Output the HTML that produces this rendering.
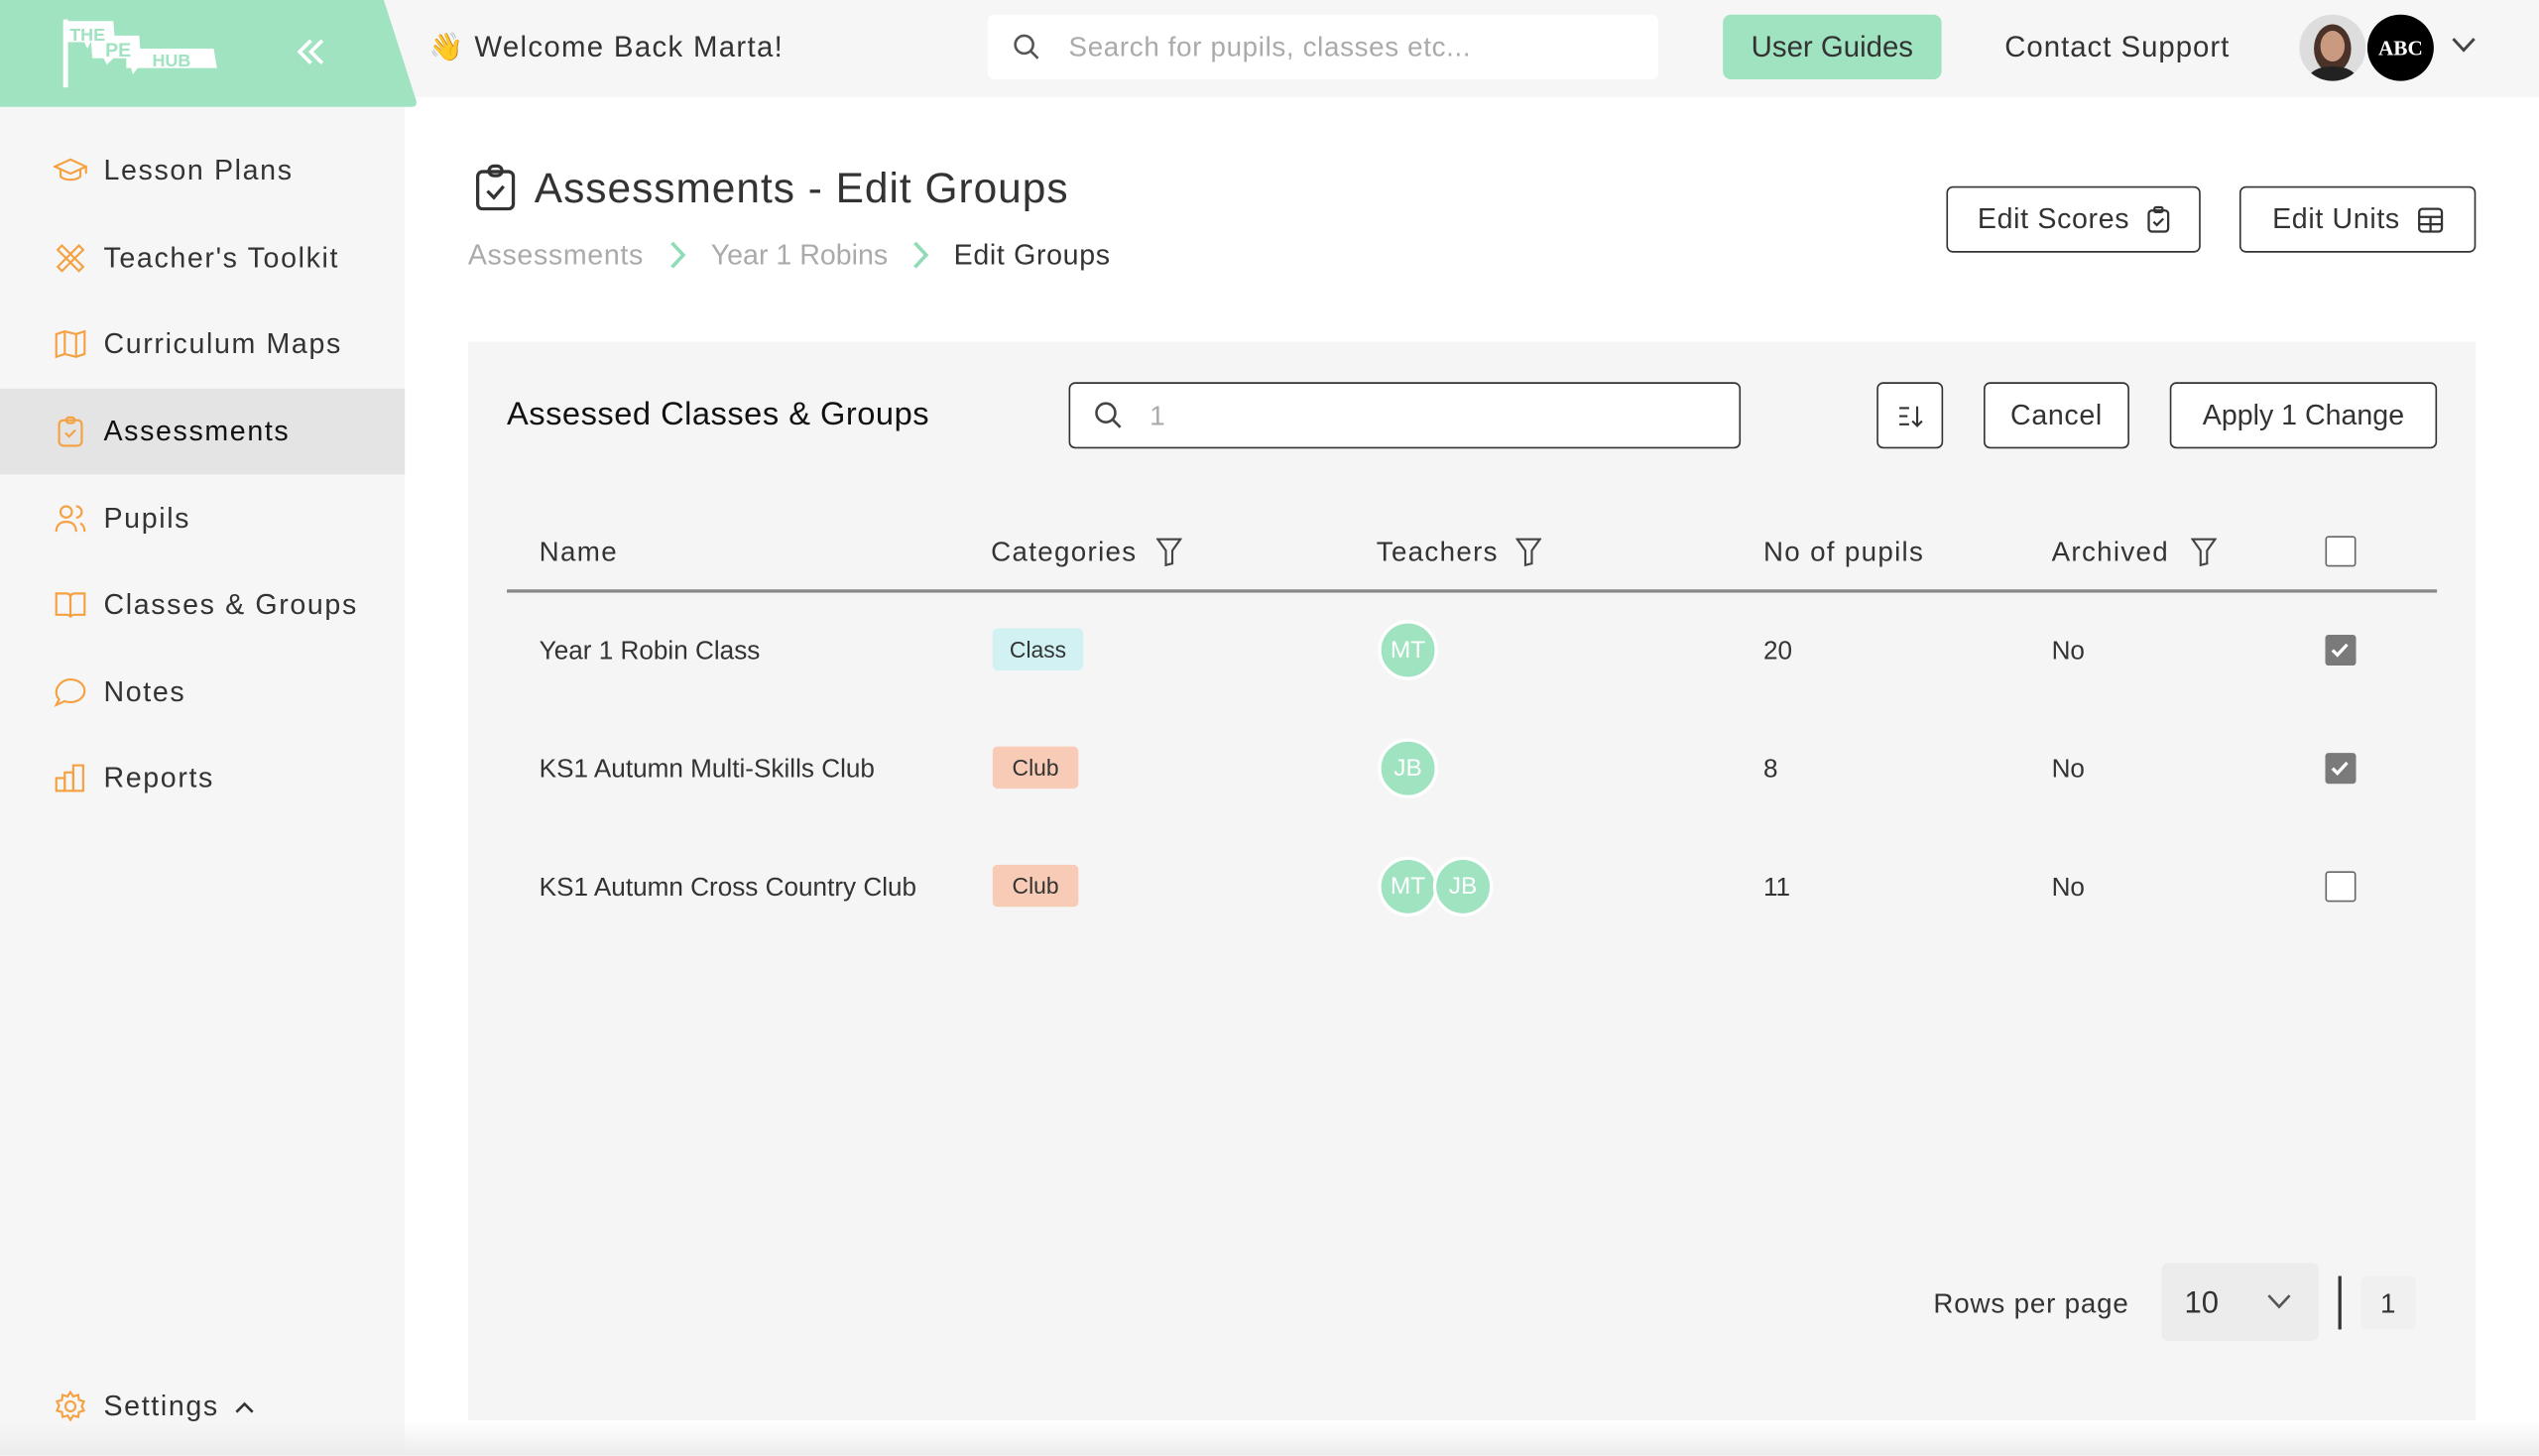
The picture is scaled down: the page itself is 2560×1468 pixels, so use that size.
<!DOCTYPE html>
<html><head><meta charset="utf-8"><style>
*{box-sizing:border-box;margin:0;padding:0}
html,body{width:2560px;height:1467px;overflow:hidden;background:#fff}
#w{position:absolute;left:0;top:0;width:1568px;height:899px;transform:scale(1.632653);transform-origin:0 0;font-family:"Liberation Sans",sans-serif;color:#333;background:#fff}
.a{position:absolute}
.t{position:absolute;white-space:nowrap;line-height:1;transform:translateY(-50%)}
.btn{position:absolute;border:1.3px solid #333;border-radius:4px;background:#fff;display:flex;align-items:center;justify-content:center;font-size:17.5px;color:#333;letter-spacing:.4px}
.nav{position:absolute;left:0;width:250px;height:53px;display:flex;align-items:center}
.nav svg{position:absolute;left:33px;width:21px;height:21px}
.nav span{position:absolute;left:64px;font-size:17.5px;color:#333;letter-spacing:1px}
.av{position:absolute;width:37px;height:37px;border-radius:50%;background:#9fe3c1;border:2px solid #fff;color:#fff;font-size:15px;display:flex;align-items:center;justify-content:center}
.cb{position:absolute;width:19px;height:19px;border-radius:2px;border:1.3px solid #666;background:#fff}
.cb.on{background:#7a7a7a;border-color:#7a7a7a}
.h{font-size:17px;letter-spacing:.8px}
.r{font-size:16px}
</style></head><body><div id="w">
<div class="a" style="left:0;top:0;width:1568px;height:60px;background:#f6f6f6"></div>
<div class="a" style="left:0;top:60px;width:250px;height:839px;background:#f6f6f6"></div>
<svg class="a" style="left:0;top:0" width="262" height="68"><path d="M0 0H237L257 62Q258 66 254 66H0Z" fill="#9fe3c1"/></svg>
<svg class="a" style="left:36px;top:10px" width="100" height="45" viewBox="0 0 100 45">
<rect x="3" y="2" width="3" height="42" fill="#fff"/>
<path d="M5 3H34L35 16H20L18 20 16 16H6Z" fill="#fff"/>
<path d="M20 12H50L51 26H34L30 30 28 26H21Z" fill="#fff"/>
<path d="M42 20H96L98 32H49L46 36 45 32H42Z" fill="#fff"/>
<text x="7" y="15" font-size="11" font-weight="bold" fill="#9fe3c1" font-family="Liberation Sans">THE</text>
<text x="29" y="25" font-size="12" font-weight="bold" fill="#9fe3c1" font-family="Liberation Sans">PE</text>
<text x="58" y="31" font-size="11" font-weight="bold" fill="#9fe3c1" font-family="Liberation Sans">HUB</text>
</svg>
<svg class="a" style="left:183px;top:24px" width="18" height="16" viewBox="0 0 18 16" fill="none" stroke="#fff" stroke-width="2.2"><path d="M9 1 2 8l7 7M16 1 9 8l7 7"/></svg>
<div class="t" style="left:265px;top:29px;font-size:17px">👋</div>
<div class="t" style="left:293px;top:29px;font-size:18px;color:#333;letter-spacing:.8px">Welcome Back Marta!</div>
<div class="a" style="left:610px;top:9px;width:414px;height:40px;background:#fff;border-radius:4px"></div>
<svg class="a" style="left:625px;top:20px" width="18" height="18" viewBox="0 0 18 18" fill="none" stroke="#555" stroke-width="1.6"><circle cx="7.5" cy="7.5" r="5.5"/><path d="M11.5 11.5 16 16"/></svg>
<div class="t" style="left:660px;top:29px;font-size:17px;color:#aaa;letter-spacing:.4px">Search for pupils, classes etc...</div>
<div class="a" style="left:1064px;top:9px;width:135px;height:40px;background:#9fe3c1;border-radius:5px;display:flex;align-items:center;justify-content:center;font-size:18px;color:#333">User Guides</div>
<div class="t" style="left:1238px;top:29px;font-size:18px;color:#333;letter-spacing:.6px">Contact Support</div>
<div class="a" style="left:1420px;top:9px;width:41px;height:41px;border-radius:50%;background:#ddd;overflow:hidden"><div class="a" style="left:9px;top:6px;width:23px;height:30px;border-radius:50%;background:#4a3228"></div><div class="a" style="left:13px;top:10px;width:15px;height:19px;border-radius:50%;background:#c99a80"></div><div class="a" style="left:6px;top:32px;width:29px;height:14px;border-radius:50%;background:#222"></div></div>
<div class="a" style="left:1462px;top:9px;width:41px;height:41px;border-radius:50%;background:#000;color:#fff;font-weight:bold;font-size:13px;display:flex;align-items:center;justify-content:center;font-family:'Liberation Serif',serif">ABC</div>
<svg class="a" style="left:1514px;top:23px" width="15" height="10" viewBox="0 0 15 10" fill="none" stroke="#444" stroke-width="1.8"><path d="M1 1l6.5 7L14 1"/></svg>
<div class="nav" style="top:79px"><svg viewBox="0 0 24 24" fill="none" stroke="#f5a041" stroke-width="1.5"><path d="M1 9l11-5 11 5-11 5z"/><path d="M5 11v5c3 3 11 3 14 0v-5M23 9v5"/></svg><span>Lesson Plans</span></div>
<div class="nav" style="top:133px"><svg viewBox="0 0 24 24" fill="none" stroke="#f5a041" stroke-width="1.5"><path d="M3 6l3-3 15 15-3 3z"/><path d="M3 18l15-15 3 3-15 15z"/></svg><span>Teacher's Toolkit</span></div>
<div class="nav" style="top:186px"><svg viewBox="0 0 24 24" fill="none" stroke="#f5a041" stroke-width="1.5"><path d="M2 5l6-2 8 2 6-2v16l-6 2-8-2-6 2z"/><path d="M8 3v16M16 5v16"/></svg><span>Curriculum Maps</span></div>
<div class="a" style="left:0;top:240px;width:250px;height:53px;background:#e4e4e4"></div>
<div class="nav" style="top:240px"><svg viewBox="0 0 24 24" fill="none" stroke="#f5a041" stroke-width="1.5"><rect x="4" y="4" width="16" height="18" rx="3"/><rect x="9" y="2" width="6" height="4" rx="2"/><path d="M8.5 13l2.5 2.5 4.5-4.5"/></svg><span style="color:#111">Assessments</span></div>
<div class="nav" style="top:294px"><svg viewBox="0 0 24 24" fill="none" stroke="#f5a041" stroke-width="1.5"><circle cx="9" cy="7" r="4"/><path d="M2 21c0-5 3-7 7-7s7 2 7 7M16 3a4 4 0 010 8M19 15c2 1 3 3 3 6"/></svg><span>Pupils</span></div>
<div class="nav" style="top:347px"><svg viewBox="0 0 24 24" fill="none" stroke="#f5a041" stroke-width="1.5"><path d="M2 4h7c2 0 3 1 3 3v14c0-1-1-2-3-2H2zM22 4h-7c-2 0-3 1-3 3v14c0-1 1-2 3-2h7z"/></svg><span>Classes &amp; Groups</span></div>
<div class="nav" style="top:401px"><svg viewBox="0 0 24 24" fill="none" stroke="#f5a041" stroke-width="1.5"><path d="M12 3c5.5 0 10 3.5 10 8s-4.5 8-10 8c-1.5 0-3-.3-4-.7L2 21l2-4c-1.3-1.5-2-3.2-2-5 0-4.5 4.5-9 10-9z"/></svg><span>Notes</span></div>
<div class="nav" style="top:454px"><svg viewBox="0 0 24 24" fill="none" stroke="#f5a041" stroke-width="1.5"><rect x="2" y="12" width="6" height="9"/><rect x="8" y="8" width="6" height="13"/><rect x="14" y="3" width="7" height="18"/></svg><span>Reports</span></div>
<div class="nav" style="top:842px"><svg viewBox="0 0 24 24" fill="none" stroke="#f5a041" stroke-width="1.5"><circle cx="12" cy="12" r="3.5"/><path d="M12 2l2 3 3.5-1 .5 3.5 3.5 1-1.5 3.5 1.5 3-3.5 1-.5 3.5-3.5-1-2 3-2-3-3.5 1-.5-3.5-3.5-1 1.5-3.5L2.5 8.5l3.5-1 .5-3.5 3.5 1z"/></svg><span>Settings</span><svg style="left:145px;width:12px;height:8px" viewBox="0 0 12 8" fill="none" stroke="#333" stroke-width="1.6"><path d="M1 7l5-5 5 5"/></svg></div>
<div class="a" style="left:0;top:878px;width:1568px;height:21px;background:linear-gradient(#fff0,#ececec)"></div>
<svg class="a" style="left:293px;top:101px" width="26" height="29" viewBox="0 0 26 29" fill="none" stroke="#333" stroke-width="2"><rect x="2" y="5" width="22" height="23" rx="3"/><rect x="9" y="1.5" width="8" height="6" rx="3"/><path d="M8 17l4 4 6-7"/></svg>
<div class="t" style="left:330px;top:116px;font-size:26px;color:#333;letter-spacing:.6px">Assessments - Edit Groups</div>
<div class="t" style="left:289px;top:158px;font-size:17.5px;color:#aaa;letter-spacing:.4px">Assessments</div>
<svg class="a" style="left:413px;top:148px" width="12" height="19" viewBox="0 0 12 19" fill="none" stroke="#8fdcb6" stroke-width="2.2"><path d="M2 2l7 7.5L2 17"/></svg>
<div class="t" style="left:439px;top:158px;font-size:17.5px;color:#aaa">Year 1 Robins</div>
<svg class="a" style="left:563px;top:148px" width="12" height="19" viewBox="0 0 12 19" fill="none" stroke="#8fdcb6" stroke-width="2.2"><path d="M2 2l7 7.5L2 17"/></svg>
<div class="t" style="left:589px;top:158px;font-size:17.5px;color:#333;letter-spacing:.4px">Edit Groups</div>
<div class="btn" style="left:1202px;top:115px;width:157px;height:41px">Edit Scores&nbsp;&nbsp;<svg width="14" height="17" viewBox="0 0 14 17" fill="none" stroke="#333" stroke-width="1.4"><rect x="1" y="3" width="12" height="13" rx="2"/><rect x="4.5" y="1" width="5" height="3" rx="1"/><path d="M4 10l2 2 4-4"/></svg></div>
<div class="btn" style="left:1383px;top:115px;width:146px;height:41px">Edit Units&nbsp;&nbsp;<svg width="16" height="16" viewBox="0 0 16 16" fill="none" stroke="#333" stroke-width="1.4"><rect x="1" y="1" width="14" height="14" rx="2"/><path d="M1 6h14M1 10.5h14M8 6v9"/></svg></div>
<div class="a" style="left:289px;top:211px;width:1240px;height:666px;background:#f5f5f5"></div>
<div class="t" style="left:313px;top:256px;font-size:20px;color:#111;letter-spacing:.3px">Assessed Classes &amp; Groups</div>
<div class="a" style="left:660px;top:236px;width:415px;height:41px;background:#fff;border:1.3px solid #333;border-radius:4px"></div>
<svg class="a" style="left:675px;top:247px" width="19" height="19" viewBox="0 0 18 18" fill="none" stroke="#444" stroke-width="1.5"><circle cx="7.5" cy="7.5" r="5.5"/><path d="M11.5 11.5 16 16"/></svg>
<div class="t" style="left:710px;top:257px;font-size:17px;color:#aaa">1</div>
<div class="btn" style="left:1159px;top:236px;width:41px;height:41px"><svg width="16" height="14" viewBox="0 0 16 14" fill="none" stroke="#333" stroke-width="1.3"><path d="M1 2h6M1 7h5M1 12h6M12 1v12M9 10l3 3 3-3"/></svg></div>
<div class="btn" style="left:1225px;top:236px;width:90px;height:41px">Cancel</div>
<div class="btn" style="left:1340px;top:236px;width:165px;height:41px;letter-spacing:0">Apply 1 Change</div>
<div class="t h" style="left:333px;top:341px">Name</div>
<div class="t h" style="left:612px;top:341px">Categories</div>
<div class="t h" style="left:850px;top:341px">Teachers</div>
<div class="t h" style="left:1089px;top:341px">No of pupils</div>
<div class="t h" style="left:1267px;top:341px">Archived</div>
<svg class="a" style="left:714px;top:332px" width="16" height="18" viewBox="0 0 16 18" fill="none" stroke="#444" stroke-width="1.3"><path d="M1 1h14l-5 7v8l-4 1V8z"/></svg>
<svg class="a" style="left:936px;top:332px" width="16" height="18" viewBox="0 0 16 18" fill="none" stroke="#444" stroke-width="1.3"><path d="M1 1h14l-5 7v8l-4 1V8z"/></svg>
<svg class="a" style="left:1353px;top:332px" width="16" height="18" viewBox="0 0 16 18" fill="none" stroke="#444" stroke-width="1.3"><path d="M1 1h14l-5 7v8l-4 1V8z"/></svg>
<div class="cb" style="left:1436px;top:331px"></div>
<div class="a" style="left:313px;top:364px;width:1192px;height:1.5px;background:#888"></div>
<div class="t r" style="left:333px;top:403px">Year 1 Robin Class</div>
<div class="a" style="left:613px;top:388px;width:56px;height:26px;background:#d1f1f3;border-radius:3px;font-size:14px;display:flex;align-items:center;justify-content:center">Class</div>
<div class="av" style="left:851px;top:383px">MT</div>
<div class="t r" style="left:1089px;top:403px">20</div>
<div class="t r" style="left:1267px;top:403px">No</div>
<div class="cb on" style="left:1436px;top:392px"><svg width="17" height="17" viewBox="0 0 17 17" fill="none" stroke="#fff" stroke-width="2"><path d="M3.5 8.5l3 3 6-6.5"/></svg></div>
<div class="t r" style="left:333px;top:476px">KS1 Autumn Multi-Skills Club</div>
<div class="a" style="left:613px;top:461px;width:53px;height:26px;background:#f7cbb5;border-radius:3px;font-size:14px;display:flex;align-items:center;justify-content:center">Club</div>
<div class="av" style="left:851px;top:456px">JB</div>
<div class="t r" style="left:1089px;top:476px">8</div>
<div class="t r" style="left:1267px;top:476px">No</div>
<div class="cb on" style="left:1436px;top:465px"><svg width="17" height="17" viewBox="0 0 17 17" fill="none" stroke="#fff" stroke-width="2"><path d="M3.5 8.5l3 3 6-6.5"/></svg></div>
<div class="t r" style="left:333px;top:549px">KS1 Autumn Cross Country Club</div>
<div class="a" style="left:613px;top:534px;width:53px;height:26px;background:#f7cbb5;border-radius:3px;font-size:14px;display:flex;align-items:center;justify-content:center">Club</div>
<div class="av" style="left:851px;top:529px">MT</div>
<div class="av" style="left:885px;top:529px">JB</div>
<div class="t r" style="left:1089px;top:549px">11</div>
<div class="t r" style="left:1267px;top:549px">No</div>
<div class="cb" style="left:1436px;top:538px"></div>
<div class="t" style="left:1194px;top:805px;font-size:17px;letter-spacing:.5px">Rows per page</div>
<div class="a" style="left:1335px;top:780px;width:97px;height:48px;background:#ececec;border-radius:4px"></div>
<div class="t" style="left:1349px;top:805px;font-size:19px">10</div>
<svg class="a" style="left:1400px;top:799px" width="15" height="10" viewBox="0 0 15 10" fill="none" stroke="#555" stroke-width="1.6"><path d="M1 1l6.5 7L14 1"/></svg>
<div class="a" style="left:1444px;top:788px;width:2px;height:33px;background:#333"></div>
<div class="a" style="left:1458px;top:788px;width:34px;height:33px;background:#f0f0f0;border-radius:4px"></div>
<div class="t" style="left:1470px;top:805px;font-size:17px">1</div>
</div></body></html>
